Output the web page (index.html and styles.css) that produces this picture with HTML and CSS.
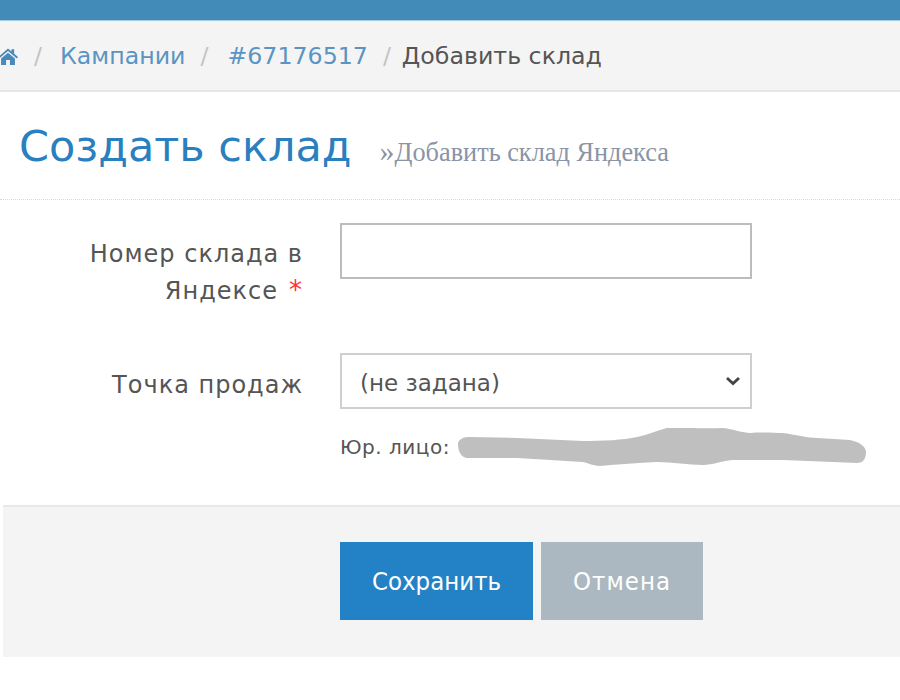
FILE: index.html
```html
<!doctype html>
<html lang="ru">
    <head>
        <meta charset="utf-8">
        <title>Создать склад</title>
        <link rel="stylesheet" href="styles.css">
    </head>
    <body>
        <div class="topbar"></div>
        <ul class="breadcrumb">
            <li class="crumb-home">
                <a href="#">
                    <svg class="home-icon" viewBox="0 0 26 22" width="20" height="17">
                        <path d="M13 0.5 L17.5 4.4 V1.5 H21 V7.5 L26 11.8 L24.4 13.6 L13 3.8 L1.6 13.6 L0 11.8 Z M4 13.6 L13 6 L22 13.6 V22 H15.5 V15.5 H10.5 V22 H4 Z" fill="#4a8ab8"/>
                    </svg>
                </a>
            </li>
            <li class="sep sep-first">/</li>
            <li><a href="#">Кампании</a></li>
            <li class="sep">/</li>
            <li><a href="#">#67176517</a></li>
            <li class="sep sep-last">/</li>
            <li class="current">Добавить склад</li>
        </ul>
        <div class="page-header">
            <h1>Создать склад</h1>
            <small><span class="raquo">»</span>Добавить склад Яндекса</small>
        </div>
        <form class="form">
            <div class="form-row row-number">
                <label class="form-label" for="number">
                    <span class="label-line">Номер склада в</span>
                    <span>Яндексе</span><span class="required">*</span>
                </label>
                <div class="form-field">
                    <input class="form-control" id="number" type="text">
                </div>
            </div>
            <div class="form-row">
                <label class="form-label label-select" for="point">Точка продаж</label>
                <div class="form-field">
                    <div class="select">
                        <select class="form-control select-control" id="point">
                            <option>(не задана)</option>
                        </select>
                        <svg class="select-arrow" viewBox="0 0 16 10" width="16" height="10">
                            <path d="M2 2 L8 7.5 L14 2" fill="none" stroke="#444" stroke-width="2.8"/>
                        </svg>
                    </div>
                    <div class="hint">
                        <span>Юр. лицо:</span>
                        <svg class="blot" viewBox="0 0 408 38" width="408" height="38">
                            <path d="M0 15 C2 10 6 9 12 9 L59 10 L125 13 C145 13 165 12 179 9 C190 7 200 2 209 0 C220 -1 240 1 265 0 C275 1 285 5 292 5 C305 4 318 5 325 5 C340 7 350 10 359 10 L392 12 C402 14 408 19 408 24 C408 32 404 35 399 35 L375 34 L325 32 L275 32 C262 33 255 37 245 37 C230 37 215 34 199 34 C180 35 160 36 142 38 C136 38 130 35 125 34 L59 30 L9 30 C3 29 0 24 0 15 Z" fill="#bfbfbf"/>
                        </svg>
                    </div>
                </div>
            </div>
            <div class="form-actions">
                <button class="btn btn-save" type="button">Сохранить</button>
                <button class="btn btn-cancel" type="button">Отмена</button>
            </div>
        </form>
    </body>
</html>
```

FILE: styles.css
```css
body {
    margin: 0;
    background: #fff;
    font-family: "DejaVu Sans", sans-serif;
    color: #555;
    overflow: hidden;
}

.topbar {
    height: 20px;
    background: #428bb9;
    border-bottom: 1px solid #a9cbe2;
}

.breadcrumb {
    list-style: none;
    margin: 0;
    padding: 1px 0 0 0;
    height: 68px;
    display: flex;
    align-items: center;
    background: #f4f4f4;
    border-bottom: 2px solid #e6e6e6;
    font-size: 23.7px;
}

.breadcrumb a {
    color: #5b94c2;
    text-decoration: none;
}

.crumb-home {
    margin-left: -2px;
    height: 17px;
}

.home-icon {
    display: block;
}

.sep {
    color: #c4c4c4;
    margin: 0 19px 0 15px;
}

.sep-first {
    margin-left: 16px;
    margin-right: 18px;
}

.sep-last {
    margin-right: 11px;
}

.current {
    color: #555;
}

.page-header {
    height: 108px;
    box-sizing: border-box;
    padding: 29px 0 0 19px;
    border-bottom: 1px dotted #d8d8d8;
    display: flex;
    align-items: flex-start;
}

.page-header h1 {
    margin: 0;
    font-size: 43px;
    font-weight: 400;
    color: #2a7fbf;
}

.page-header small {
    margin: 17px 0 0 28px;
    font-family: "Liberation Serif", serif;
    font-size: 26.3px;
    line-height: 30px;
    color: #8a94a6;
}

.raquo {
    font-size: 30px;
    line-height: 26px;
}

.form-row {
    display: grid;
    grid-template-columns: 303px 412px;
    column-gap: 37px;
}

.row-number {
    margin-top: 23px;
    height: 130px;
}

.form-label {
    font-size: 24px;
    letter-spacing: 1px;
    line-height: 37px;
    padding-top: 13px;
    text-align: right;
}

.label-line {
    display: block;
}

.label-select {
    padding-top: 14px;
}

.required {
    margin-left: 11px;
    color: #f33;
    font-size: 26px;
    line-height: 26px;
}

.form-control {
    display: block;
    box-sizing: border-box;
    width: 412px;
    height: 56px;
    margin: 0;
    background: #fff;
    border: 2px solid #bcbcbc;
    border-radius: 0;
    font-family: "DejaVu Sans", sans-serif;
    font-size: 23px;
    color: #555;
}

.select {
    position: relative;
}

.select-control {
    appearance: none;
    padding: 3px 18px 0;
    border-color: #cfcfcf;
}

.select-arrow {
    position: absolute;
    top: 23px;
    right: 11px;
}

.hint {
    display: flex;
    align-items: center;
    margin-top: 19px;
    height: 38px;
    font-size: 20px;
    letter-spacing: 0.5px;
    white-space: nowrap;
}

.blot {
    flex: none;
    margin-left: 8px;
}

.form-actions {
    margin: 39px 0 0 3px;
    height: 152px;
    padding: 35px 0 0 337px;
    box-sizing: border-box;
    background: #f4f4f4;
    border-top: 2px solid #e8e8e8;
    display: flex;
    align-items: flex-start;
    column-gap: 8px;
}

.btn {
    height: 78px;
    border: 0;
    border-radius: 0;
    color: #fff;
    font-family: "DejaVu Sans Condensed", "DejaVu Sans", sans-serif;
    font-size: 25.5px;
}

.btn-save {
    width: 193px;
    background: #2382c6;
}

.btn-cancel {
    width: 162px;
    background: #abb8c1;
    letter-spacing: 1px;
}
```
